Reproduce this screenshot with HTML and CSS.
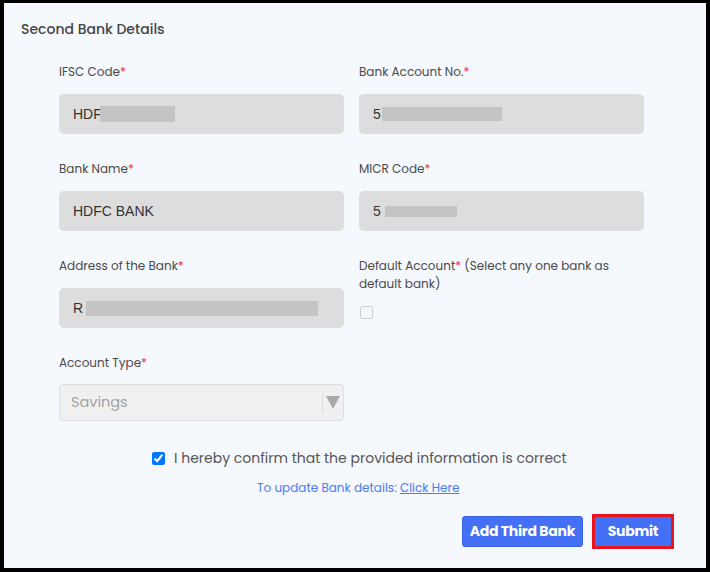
FILE: index.html
```html
<!DOCTYPE html>
<html>
<head>
<meta charset="utf-8">
<link rel="stylesheet" href="styles.css">
</head>
<body>
<div class="frame">
  <h2 class="title">Second Bank Details</h2>
  <div class="grid">
    <div class="field">
      <label class="label">IFSC Code<span class="req">*</span></label>
      <div class="input">HDF<span class="mask mask-tight" style="width:75px;height:16px"></span></div>
    </div>
    <div class="field">
      <label class="label">Bank Account No.<span class="req">*</span></label>
      <div class="input">5<span class="mask" style="width:120px;height:14px"></span></div>
    </div>
    <div class="field">
      <label class="label">Bank Name<span class="req">*</span></label>
      <div class="input">HDFC BANK</div>
    </div>
    <div class="field">
      <label class="label">MICR Code<span class="req">*</span></label>
      <div class="input">5<span class="mask mask-micr" style="width:72px;height:11px"></span></div>
    </div>
    <div class="field">
      <label class="label">Address of the Bank<span class="req">*</span></label>
      <div class="input">R<span class="mask mask-wide" style="width:232px;height:15px"></span></div>
    </div>
    <div class="field">
      <label class="label">Default Account<span class="req">*</span> (Select any one bank as default bank)</label>
      <input type="checkbox" class="default-check" disabled>
    </div>
    <div class="field">
      <label class="label">Account Type<span class="req">*</span></label>
      <div class="select">
        <span class="select-value">Savings</span>
        <span class="select-arrow"><span class="sep"></span><span class="tri"></span></span>
      </div>
    </div>
  </div>
  <div class="confirm">
    <input type="checkbox" class="confirm-check" checked>
    <span>I hereby confirm that the provided information is correct</span>
  </div>
  <p class="update">To update Bank details: <a href="#">Click Here</a></p>
  <div class="actions">
    <button class="btn">Add Third Bank</button>
    <div class="highlight"><button class="btn btn-submit">Submit</button></div>
  </div>
</div>
</body>
</html>
```
FILE: styles.css
```css
html, body {
  margin: 0;
  padding: 0;
  background: #000;
}
body {
  width: 710px;
  height: 572px;
  box-sizing: border-box;
  padding: 3px 4px 4px 4px;
  font-family: "Poppins", "Open Sans", "Noto Sans", sans-serif;
}
.frame {
  background: #f5f8fd;
  height: 565px;
  box-sizing: border-box;
  padding: 16px 32px 0 17px;
}
.title {
  margin: 0;
  font-size: 14px;
  font-weight: 500;
  line-height: 20px;
  color: #454545;
}
.grid {
  margin: 24px 0 0 38px;
  display: grid;
  grid-template-columns: 285px 285px;
  column-gap: 15px;
  row-gap: 26px;
}
.field {
  display: flex;
  flex-direction: column;
}
.label {
  font-size: 12px;
  line-height: 18px;
  color: #4a4a4a;
  margin-bottom: 13px;
}
.req {
  color: #e53950;
}
.input {
  height: 40px;
  box-sizing: border-box;
  background: #dddddd;
  border-radius: 5px;
  padding: 0 14px;
  display: flex;
  align-items: center;
  font-family: "Liberation Sans", Arial, sans-serif;
  font-size: 14px;
  color: #333;
}
.mask {
  display: inline-block;
  background: #c4c4c4;
  margin-left: 1px;
}
.mask-tight {
  margin-left: -2px;
}
.mask-micr {
  margin-left: 4px;
}
.mask-wide {
  margin-left: 3px;
}
.default-check {
  margin: 0 0 0 1px;
  width: 13px;
  height: 13px;
}
.select {
  margin-top: -1px;
  height: 37px;
  box-sizing: border-box;
  background: #f0f0f0;
  border: 1px solid #dedede;
  border-radius: 4px;
  display: flex;
  align-items: center;
  justify-content: space-between;
  padding: 0 3px 0 11px;
}
.select-value {
  font-size: 14.5px;
  color: #a3a3a3;
}
.select-arrow {
  display: flex;
  align-items: center;
  gap: 3px;
}
.sep {
  width: 1px;
  height: 20px;
  background: #dadada;
}
.tri {
  width: 0;
  height: 0;
  border-left: 7px solid transparent;
  border-right: 7px solid transparent;
  border-top: 13px solid #a9a9a9;
}
.confirm {
  margin: 26px 0 0 0;
  padding-left: 131px;
  display: flex;
  align-items: center;
  gap: 9px;
  font-size: 14px;
  line-height: 22px;
  color: #555;
}
.confirm-check {
  margin: 0;
  width: 13px;
  height: 13px;
}
.update {
  margin: 11px 0 0 0;
  padding-left: 236px;
  font-size: 12px;
  line-height: 16px;
  color: #4a7cf6;
}
.update a {
  color: #4a7cf6;
  text-decoration: underline;
}
.actions {
  margin-top: 18px;
  display: flex;
  justify-content: flex-end;
  align-items: center;
  gap: 9px;
}
.btn {
  background: #4470f5;
  color: #fff;
  border: 1px solid #3a63e6;
  border-radius: 3px;
  font-family: "Poppins", "Open Sans", sans-serif;
  font-weight: 700;
  font-size: 14px;
  height: 31px;
  padding: 0 7px;
  letter-spacing: -0.3px;
}
.highlight {
  border: 3px solid #e8141c;
  display: flex;
}
.btn-submit {
  height: 29px;
  width: 76px;
  border: none;
  border-radius: 0;
}
```
